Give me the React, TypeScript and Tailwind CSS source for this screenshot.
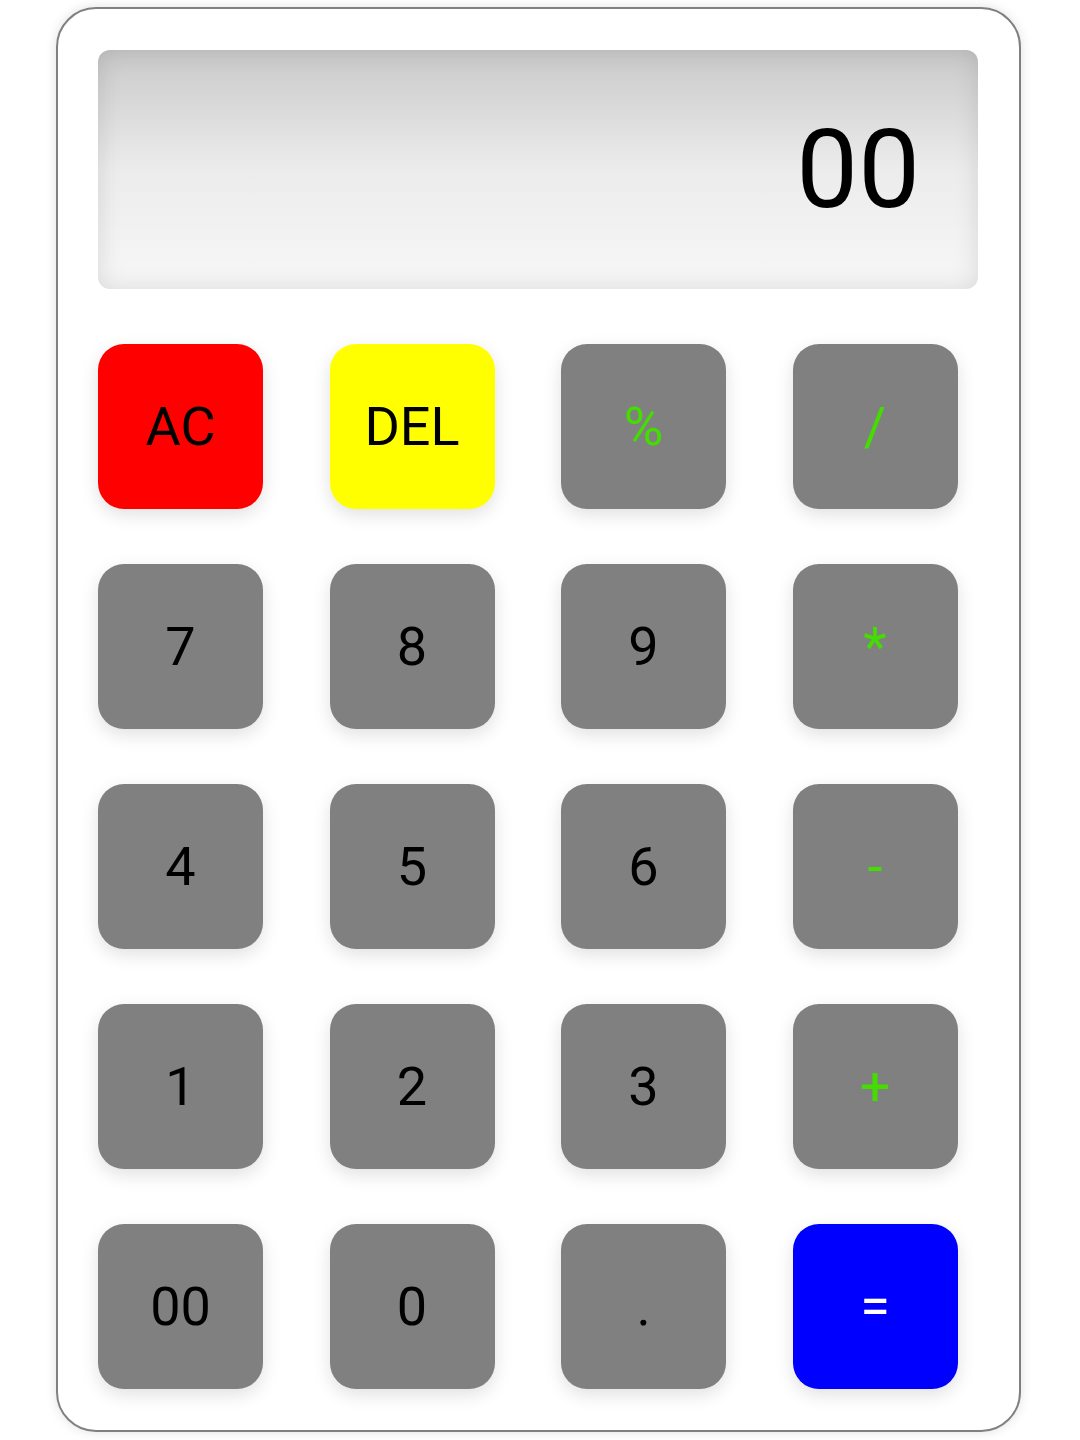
const keys: { label: string; cls: string }[] = [
  { label: 'AC', cls: 'bg-[#ff0000] text-black' },
  { label: 'DEL', cls: 'bg-[#ffff00] text-black' },
  { label: '%', cls: 'bg-[#808080] text-[#44dd00]' },
  { label: '/', cls: 'bg-[#808080] text-[#44dd00]' },
  { label: '7', cls: 'bg-[#808080] text-black' },
  { label: '8', cls: 'bg-[#808080] text-black' },
  { label: '9', cls: 'bg-[#808080] text-black' },
  { label: '*', cls: 'bg-[#808080] text-[#44dd00]' },
  { label: '4', cls: 'bg-[#808080] text-black' },
  { label: '5', cls: 'bg-[#808080] text-black' },
  { label: '6', cls: 'bg-[#808080] text-black' },
  { label: '-', cls: 'bg-[#808080] text-[#44dd00]' },
  { label: '1', cls: 'bg-[#808080] text-black' },
  { label: '2', cls: 'bg-[#808080] text-black' },
  { label: '3', cls: 'bg-[#808080] text-black' },
  { label: '+', cls: 'bg-[#808080] text-[#44dd00]' },
  { label: '00', cls: 'bg-[#808080] text-black' },
  { label: '0', cls: 'bg-[#808080] text-black' },
  { label: '.', cls: 'bg-[#808080] text-black' },
  { label: '=', cls: 'bg-[#0000ff] text-white' },
];

export default function App() {
  return (
    <div className="min-h-[1440px] bg-white pt-[7px] pl-[56px] font-['Roboto',sans-serif]">
      {/* Calculator body */}
      <div className="w-[965px] h-[1425px] rounded-[40px] border-2 border-[#808080] bg-white shadow-[0_0_12px_rgba(0,0,0,0.12)] pt-[41px] pl-[40px]">
        {/* Display */}
        <div className="w-[880px] h-[239px] rounded-[12px] bg-gradient-to-b from-[#c9c9c9] via-[#ececec] to-[#f7f7f7] shadow-[inset_0_0_24px_rgba(0,0,0,0.12)] flex items-center justify-end pr-[58px]">
          <span className="text-[110px] leading-none text-black">00</span>
        </div>

        {/* Keypad */}
        <div className="mt-[55px] grid grid-cols-[repeat(4,165px)] gap-x-[66.5px] gap-y-[55px]">
          {keys.map(k => (
            <button
              key={k.label}
              className={`w-[165px] h-[165px] rounded-[26px] shadow-[0_6px_18px_rgba(0,0,0,0.12)] flex items-center justify-center text-[54px] leading-none ${k.cls}`}
            >
              {k.label}
            </button>
          ))}
        </div>
      </div>
    </div>
  );
}
